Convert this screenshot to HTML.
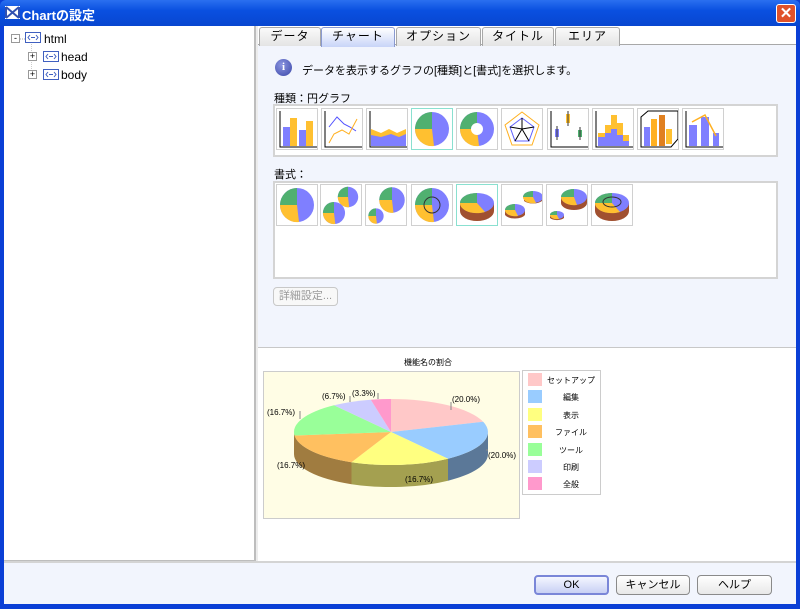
<!DOCTYPE html>
<html><head><meta charset="utf-8"><style>
*{margin:0;padding:0;box-sizing:border-box}
body{width:800px;height:609px;overflow:hidden;background:#0a3fd6;font-family:"Liberation Sans","Noto Sans CJK JP",sans-serif;position:relative}
.a{position:absolute}
.t{font-size:12px;color:#000;white-space:nowrap}
.tab{position:absolute;top:27px;height:19px;border:1px solid #a8a8a8;border-bottom:none;border-radius:3px 3px 0 0;background:linear-gradient(#fafafa,#e4e4e4);font-size:12px;text-align:center;line-height:17px;letter-spacing:1px}
.ic{position:absolute;width:42px;height:42px;background:#fff;border:1px solid #d0d0d0}
.btn{position:absolute;top:575px;height:20px;border:1px solid #8a8a8a;border-radius:4px;background:linear-gradient(#fff,#e8e8e8);font-size:11px;text-align:center;line-height:18px}
.lg{position:absolute;left:528px;width:14px;height:13px}
.lt{position:absolute;left:546px;width:50px;text-align:center;font-size:8px}
.pl{position:absolute;font-size:8px;color:#000}
</style></head><body>
<!-- title bar -->
<div class="a" style="left:0;top:0;width:800px;height:26px;background:linear-gradient(#2a6ff0,#0a50e0 40%,#0846d0);border-radius:6px 6px 0 0"></div>
<svg class="a" style="left:5px;top:6px" width="15" height="13"><rect width="15" height="13" fill="#fff"/><path d="M1 1L14 12M14 1L1 12M1 1V12M14 1V12" stroke="#3050b0" stroke-width="2"/></svg>
<div class="a" style="left:22px;top:5px;color:#fff;font-size:13px;font-weight:bold">Chartの設定</div>
<div class="a" style="left:776px;top:4px;width:20px;height:19px;background:#e0522a;border:1px solid #fff;border-radius:3px;color:#fff;font-size:15px;text-align:center;line-height:17px;font-weight:bold">✕</div>
<!-- body -->
<div class="a" style="left:4px;top:26px;width:792px;height:578px;background:#f2f5fd"></div>
<div class="a" style="left:4px;top:26px;width:252px;height:535px;background:#fff;border-right:2px solid #bdbdbd;border-bottom:1px solid #bdbdbd"></div>
<div class="a" style="left:256px;top:26px;width:2px;height:535px;background:#ececec"></div>
<div class="a" style="left:4px;top:561px;width:792px;height:2px;background:#d4d4d4"></div>
<!-- tree -->
<div class="a" style="left:11px;top:34px;width:9px;height:9px;border:1px solid #999;background:#fff;font-size:9px;line-height:6px;text-align:center">-</div>
<svg class="a" style="left:20px;top:38px" width="10" height="2"><path d="M0 1H10" stroke="#aaa" stroke-dasharray="1 1"/></svg>
<svg class="a" style="left:25px;top:32px" width="16" height="11"><rect x=".5" y=".5" width="15" height="10" fill="#fff" stroke="#4060c0"/><path d="M5 3L3 5.5L5 8M11 3L13 5.5L11 8M6 5.5H10" stroke="#4060c0" fill="none"/></svg>
<div class="a t" style="left:44px;top:32px">html</div>
<svg class="a" style="left:30px;top:44px" width="12" height="32"><path d="M1.5 0V32" stroke="#ccc" stroke-dasharray="1 1"/></svg>
<div class="a" style="left:28px;top:52px;width:9px;height:9px;border:1px solid #999;background:#fff;font-size:9px;line-height:7px;text-align:center">+</div>
<svg class="a" style="left:43px;top:51px" width="16" height="11"><rect x=".5" y=".5" width="15" height="10" fill="#fff" stroke="#4060c0"/><path d="M5 3L3 5.5L5 8M11 3L13 5.5L11 8M6 5.5H10" stroke="#4060c0" fill="none"/></svg>
<div class="a t" style="left:61px;top:50px">head</div>
<div class="a" style="left:28px;top:70px;width:9px;height:9px;border:1px solid #999;background:#fff;font-size:9px;line-height:7px;text-align:center">+</div>
<svg class="a" style="left:43px;top:69px" width="16" height="11"><rect x=".5" y=".5" width="15" height="10" fill="#fff" stroke="#4060c0"/><path d="M5 3L3 5.5L5 8M11 3L13 5.5L11 8M6 5.5H10" stroke="#4060c0" fill="none"/></svg>
<div class="a t" style="left:61px;top:68px">body</div>
<!-- right -->
<div class="a" style="left:258px;top:26px;width:538px;height:19px;background:#fff"></div>
<div class="a" style="left:258px;top:44px;width:538px;height:1px;background:#a8a8a8"></div>
<div class="tab" style="left:259px;width:62px">データ</div>
<div class="tab" style="left:321px;width:74px;background:linear-gradient(#fff,#c8d4f8);border-color:#8a9ad0;height:20px">チャート</div>
<div class="tab" style="left:396px;width:85px">オプション</div>
<div class="tab" style="left:482px;width:72px">タイトル</div>
<div class="tab" style="left:555px;width:65px">エリア</div>
<div class="a" style="left:258px;top:347px;width:538px;height:214px;background:#fff;border-top:1px solid #c8c8c8"></div>
<div class="a" style="left:275px;top:59px;width:17px;height:17px;border-radius:50%;background:radial-gradient(circle at 40% 35%,#8b95e0,#3a46a8);color:#fff;font:bold 11px 'Liberation Serif',serif;text-align:center;line-height:17px">i</div>
<div class="a t" style="left:302px;top:62px;font-size:11px">データを表示するグラフの[種類]と[書式]を選択します。</div>
<div class="a t" style="left:274px;top:90px;font-size:11px">種類：円グラフ</div>
<div class="a" style="left:273px;top:104px;width:505px;height:53px;background:#fff;border:2px solid #d4d4d4"></div>
<div class="ic" style="left:276px;top:108px"><svg width="40" height="40"><path d="M3 2V38H40" stroke="#000" fill="none"/><rect x="6" y="18" width="7" height="19" fill="#7f7fff"/><rect x="13" y="9" width="7" height="28" fill="#ffc030"/><rect x="22" y="21" width="7" height="16" fill="#7f7fff"/><rect x="29" y="12" width="7" height="25" fill="#ffc030"/></svg></div>
<div class="ic" style="left:321px;top:108px"><svg width="40" height="40"><path d="M3 2V38H40" stroke="#000" fill="none"/><path d="M7 18L15 8L22 15L28 18L34 22" stroke="#5050ff" fill="none"/><path d="M7 34L12 25L20 21L27 25L35 10" stroke="#ffb020" fill="none"/></svg></div>
<div class="ic" style="left:366px;top:108px"><svg width="40" height="40"><path d="M3 2V38H40" stroke="#000" fill="none"/><path d="M4 20L14 24L22 20L30 24L39 20V37H4Z" fill="#ffc030"/><path d="M4 26L14 28L24 25L32 28L39 25V37H4Z" fill="#7f7fff"/></svg></div>
<div class="ic" style="left:411px;top:108px;border-color:#8ae0d0"><svg width="40" height="40"><circle cx="20" cy="20" r="17" fill="#7f7fff"/><path d="M20 20L20 3A17 17 0 0 0 3 20Z" fill="#50b070"/><path d="M20 20L3 20A17 17 0 0 0 22 37Z" fill="#ffc030"/></svg></div>
<div class="ic" style="left:456px;top:108px"><svg width="40" height="40"><circle cx="20" cy="20" r="17" fill="#7f7fff"/><path d="M20 20L20 3A17 17 0 0 0 3 20Z" fill="#50b070"/><path d="M20 20L3 20A17 17 0 0 0 22 37Z" fill="#ffc030"/><circle cx="20" cy="20" r="6" fill="#fff"/></svg></div>
<div class="ic" style="left:501px;top:108px"><svg width="40" height="40"><path d="M20 3L37 16L30 36H10L3 16Z" stroke="#ffb020" fill="none"/><path d="M20 9L32 18L27 32H13L8 18Z" stroke="#6060ff" fill="none"/><path d="M20 20L20 9M20 20L32 18M20 20L27 32M20 20L13 32M20 20L8 18" stroke="#000"/></svg></div>
<div class="ic" style="left:547px;top:108px"><svg width="40" height="40"><path d="M3 2V38H40" stroke="#000" fill="none"/><rect x="7" y="20" width="4" height="8" fill="#7f7fff"/><rect x="18" y="5" width="4" height="9" fill="#ffc030"/><rect x="30" y="21" width="4" height="7" fill="#50b070"/><path d="M9 17V31M20 2V17M32 18V31" stroke="#333"/></svg></div>
<div class="ic" style="left:592px;top:108px"><svg width="40" height="40"><path d="M3 2V38H40" stroke="#000" fill="none"/><path d="M5 24H12V16H18V6H24V14H30V26H36V37H5Z" fill="#ffc030"/><path d="M5 28H12V24H18V20H24V26H30V32H36V37H5Z" fill="#7f7fff"/></svg></div>
<div class="ic" style="left:637px;top:108px"><svg width="40" height="40"><path d="M3 8L10 2H40V30L33 38H3Z" stroke="#000" fill="none"/><rect x="6" y="18" width="6" height="19" fill="#7f7fff"/><rect x="13" y="10" width="6" height="27" fill="#ffb020"/><rect x="21" y="6" width="6" height="31" fill="#e08020"/><rect x="28" y="20" width="6" height="15" fill="#ffc030"/></svg></div>
<div class="ic" style="left:682px;top:108px"><svg width="40" height="40"><path d="M3 2V38H40" stroke="#000" fill="none"/><rect x="6" y="16" width="8" height="21" fill="#7f7fff"/><rect x="18" y="8" width="8" height="29" fill="#7f7fff"/><rect x="30" y="24" width="6" height="13" fill="#7f7fff"/><path d="M9 13L22 6L33 27" stroke="#ffb020" fill="none" stroke-width="1.5"/></svg></div>
<div class="a t" style="left:274px;top:166px;font-size:11px">書式：</div>
<div class="a" style="left:273px;top:181px;width:505px;height:98px;background:#fff;border:2px solid #d4d4d4"></div>
<div class="ic" style="left:276px;top:184px"><svg width="40" height="40"><circle cx="20" cy="20" r="17" fill="#7f7fff"/><path d="M20 20L20 3A17 17 0 0 0 3 20Z" fill="#50b070"/><path d="M20 20L3 20A17 17 0 0 0 22 37Z" fill="#ffc030"/></svg></div>
<div class="ic" style="left:320px;top:184px"><svg width="40" height="40"><g transform="translate(27,12) scale(.6)"><circle r="17" fill="#7f7fff"/><path d="M0 0L0 -17A17 17 0 0 0 -17 0Z" fill="#50b070"/><path d="M0 0L-17 0A17 17 0 0 0 2 17Z" fill="#ffc030"/></g><g transform="translate(13,28) scale(.65)"><circle r="17" fill="#7f7fff"/><path d="M0 0L0 -17A17 17 0 0 0 -17 0Z" fill="#50b070"/><path d="M0 0L-17 0A17 17 0 0 0 2 17Z" fill="#ffc030"/></g></svg></div>
<div class="ic" style="left:365px;top:184px"><svg width="40" height="40"><g transform="translate(26,15) scale(.75)"><circle r="17" fill="#7f7fff"/><path d="M0 0L0 -17A17 17 0 0 0 -17 0Z" fill="#50b070"/><path d="M0 0L-17 0A17 17 0 0 0 2 17Z" fill="#ffc030"/></g><g transform="translate(10,31) scale(.45)"><circle r="17" fill="#7f7fff"/><path d="M0 0L0 -17A17 17 0 0 0 -17 0Z" fill="#50b070"/><path d="M0 0L-17 0A17 17 0 0 0 2 17Z" fill="#ffc030"/></g></svg></div>
<div class="ic" style="left:411px;top:184px"><svg width="40" height="40"><circle cx="20" cy="20" r="17" fill="#7f7fff"/><path d="M20 20L20 3A17 17 0 0 0 3 20Z" fill="#50b070"/><path d="M20 20L3 20A17 17 0 0 0 22 37Z" fill="#ffc030"/><circle cx="20" cy="20" r="8" fill="none" stroke="#333"/></svg></div>
<div class="ic" style="left:456px;top:184px;border-color:#8ae0d0"><svg width="40" height="40"><path d="M3 18V26A17 10 0 0 0 37 26V18Z" fill="#a05030"/><ellipse cx="20" cy="18" rx="17" ry="10" fill="#7f7fff"/><path d="M20 18L20 8A17 10 0 0 0 3 18Z" fill="#50b070"/><path d="M20 18L3 18A17 10 0 0 0 28 27Z" fill="#ffc030"/></svg></div>
<div class="ic" style="left:501px;top:184px"><svg width="40" height="40"><path d="M22 12V16A11 6 0 0 0 40 16V12Z" fill="#a05030"/><ellipse cx="31" cy="12" rx="10" ry="6" fill="#7f7fff"/><path d="M31 12L31 6A10 6 0 0 0 21 12Z" fill="#50b070"/><path d="M31 12L21 12A10 6 0 0 0 34 18Z" fill="#ffc030"/><path d="M3 25V30A11 6 0 0 0 23 30V25Z" fill="#a05030"/><ellipse cx="13" cy="25" rx="10" ry="6" fill="#7f7fff"/><path d="M13 25L13 19A10 6 0 0 0 3 25Z" fill="#50b070"/><path d="M13 25L3 25A10 6 0 0 0 16 31Z" fill="#ffc030"/></svg></div>
<div class="ic" style="left:546px;top:184px"><svg width="40" height="40"><path d="M14 12V18A13 7 0 0 0 40 18V12Z" fill="#a05030"/><ellipse cx="27" cy="12" rx="13" ry="8" fill="#7f7fff"/><path d="M27 12L27 4A13 8 0 0 0 14 12Z" fill="#50b070"/><path d="M27 12L14 12A13 8 0 0 0 30 20Z" fill="#ffc030"/><path d="M3 30V33A8 4 0 0 0 17 33V30Z" fill="#a05030"/><ellipse cx="10" cy="30" rx="7" ry="4" fill="#7f7fff"/><path d="M10 30L10 26A7 4 0 0 0 3 30Z" fill="#50b070"/><path d="M10 30L3 30A7 4 0 0 0 12 34Z" fill="#ffc030"/></svg></div>
<div class="ic" style="left:591px;top:184px"><svg width="40" height="40"><path d="M3 18V26A17 10 0 0 0 37 26V18Z" fill="#a05030"/><ellipse cx="20" cy="18" rx="17" ry="10" fill="#7f7fff"/><path d="M20 18L20 8A17 10 0 0 0 3 18Z" fill="#50b070"/><path d="M20 18L3 18A17 10 0 0 0 28 27Z" fill="#ffc030"/><ellipse cx="20" cy="17" rx="9" ry="5" fill="none" stroke="#333"/></svg></div>
<div class="a" style="left:273px;top:287px;width:65px;height:19px;border:1px solid #c8c8c8;border-radius:4px;background:#f8f8f8;color:#999;font-size:11px;line-height:17px;text-align:center">詳細設定...</div>
<!-- chart -->
<div class="a" style="left:404px;top:357px;font-size:8px">機能名の割合</div>
<div class="a" style="left:263px;top:371px;width:257px;height:148px;background:#fffde5;border:1px solid #ccc"></div>
<svg class="a" style="left:0;top:0" width="800" height="609">
<path d="M488 432A97 33 0 0 1 448 458.7L448 480.7A97 33 0 0 0 488 454Z" fill="#5b7898"/>
<path d="M448 458.7A97 33 0 0 1 351.5 462.2L351.5 484.2A97 33 0 0 0 448 480.7Z" fill="#a4a050"/>
<path d="M351.5 462.2A97 33 0 0 1 294 432L294 454A97 33 0 0 0 351.5 484.2Z" fill="#a07c40"/>
<path d="M391 432L391 399A97 33 0 0 1 483.2 421.8Z" fill="#ffc8c8"/>
<path d="M391 432L483.2 421.8A97 33 0 0 1 448 458.7Z" fill="#99ccff"/>
<path d="M391 432L448 458.7A97 33 0 0 1 351.5 462.2Z" fill="#ffff80"/>
<path d="M391 432L351.5 462.2A97 33 0 0 1 294.5 435.5Z" fill="#ffc060"/>
<path d="M391 432L294.5 435.5A97 33 0 0 1 334 405.3Z" fill="#99ff99"/>
<path d="M391 432L334 405.3A97 33 0 0 1 370.8 399.7Z" fill="#ccccff"/>
<path d="M391 432L370.8 399.7A97 33 0 0 1 391 399Z" fill="#ff99cc"/>
<path d="M451 402V410M300 411V419M350 396V402M378 393V399M488 450H486" stroke="#888"/>
</svg>
<div class="pl" style="left:452px;top:395px">(20.0%)</div>
<div class="pl" style="left:488px;top:451px">(20.0%)</div>
<div class="pl" style="left:405px;top:475px">(16.7%)</div>
<div class="pl" style="left:277px;top:461px">(16.7%)</div>
<div class="pl" style="left:267px;top:408px">(16.7%)</div>
<div class="pl" style="left:322px;top:392px">(6.7%)</div>
<div class="pl" style="left:352px;top:389px">(3.3%)</div>
<div class="a" style="left:522px;top:370px;width:79px;height:125px;background:#fff;border:1px solid #ccc"></div>
<div class="lg" style="top:373px;background:#ffc8c8"></div><div class="lt" style="top:375px">セットアップ</div>
<div class="lg" style="top:390px;background:#99ccff"></div><div class="lt" style="top:392px">編集</div>
<div class="lg" style="top:408px;background:#ffff80"></div><div class="lt" style="top:410px">表示</div>
<div class="lg" style="top:425px;background:#ffc060"></div><div class="lt" style="top:427px">ファイル</div>
<div class="lg" style="top:443px;background:#99ff99"></div><div class="lt" style="top:445px">ツール</div>
<div class="lg" style="top:460px;background:#ccccff"></div><div class="lt" style="top:462px">印刷</div>
<div class="lg" style="top:477px;background:#ff99cc"></div><div class="lt" style="top:479px">全般</div>
<!-- buttons -->
<div class="btn" style="left:534px;width:75px;border:2px solid #7a86d8;background:linear-gradient(#f4f6ff,#c8d0f4);line-height:16px">OK</div>
<div class="btn" style="left:616px;width:74px">キャンセル</div>
<div class="btn" style="left:697px;width:75px">ヘルプ</div>
</body></html>
